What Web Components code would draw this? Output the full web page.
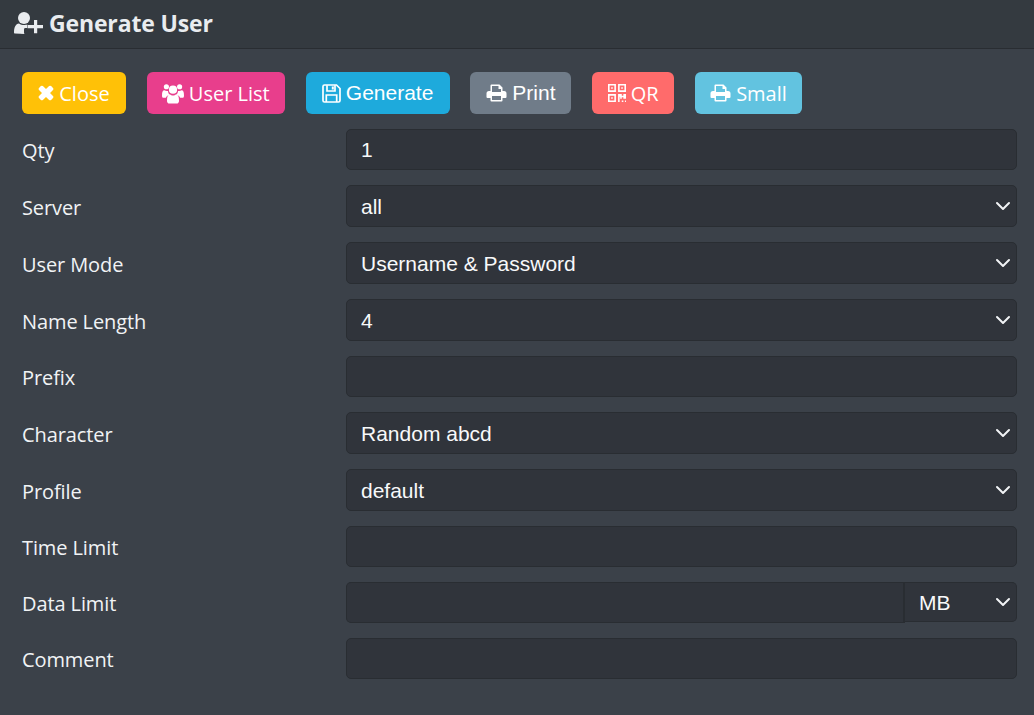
<!DOCTYPE html>
<html>
<head>
<meta charset="utf-8">
<title>Generate User</title>
<style>
	html, body { margin: 0; height: 100%; background: #3b4149; }
	body { font-family: "Open Sans", "Liberation Sans", sans-serif; color: #f1f3f5; overflow: hidden; }
	svg { display: block; }
</style>
</head>
<body>
<gen-panel>
	<span slot="icon">
		<svg width="31" height="24" viewBox="0 0 31 24" fill="#e9ecef">
			<circle cx="10" cy="7" r="6"/>
			<path d="M1 22.500c-.6 0-1-.4-1-1 0-5 1.600-8.800 5-9.100 1.500 1 3.300 1.600 5 1.600 1.500 0 2.300-.2 3.400-.8l-.4 1v2.800h-1.500c-1 0-1.500.5-1.500 1.500v3c0 1 .5 1.500 1.500 1.500z" />
			<path d="M20 9h3.200v5H29v3.200h-5.800v5H20v-5h-6.500V14H20z"/>
		</svg>
	</span>
	<span slot="title">Generate User</span>

	<button-bar slot="actions">
		<action-button color="#ffc107" width="104">
			<svg slot="icon" width="16" height="16" viewBox="0 0 16 16" fill="#fff"><path d="M15.400 12q0 .6-.4 1l-1.900 1.900q-.4.400-1 .4t-1-.4L8 11.900l-3.100 3q-.4.400-1 .4t-1-.4L1 13q-.4-.4-.4-1t.4-1l3-3-3-3.100Q.6 4.500.6 4t.4-1l1.900-1.900q.4-.4 1-.4t1 .4L8 4.100l3.100-3q.4-.4 1-.4t1 .4L15 3q.4.400.4 1t-.4 1l-3 3 3 3q.4.400.4 1z"/></svg>
			Close
		</action-button>
		<action-button color="#e83e8c" width="138">
			<svg slot="icon" width="22" height="22" viewBox="0 0 23 22" fill="#fff">
				<circle cx="11.500" cy="7.500" r="4.300"/>
				<circle cx="4.600" cy="4.500" r="2.700"/>
				<circle cx="18.400" cy="4.500" r="2.700"/>
				<path d="M0 13.500C0 10 .8 8.200 2.500 8.200c.8.600 1.600.8 2.600.8.500 0 .9-.1 1.200-.2-.1 1.500.7 3 1.700 4-2.200.7-3.500 1.700-3.900 3.200H1.500C.5 16 0 15 0 13.500zM23 13.500c0 1.500-.5 2.500-1.500 2.500h-2.600c-.4-1.500-1.700-2.500-3.900-3.200 1-1 1.800-2.500 1.700-4 .3.100.7.200 1.200.2 1 0 1.800-.2 2.600-.8 1.700 0 2.500 1.800 2.500 5.300z"/>
				<path d="M5.200 19c0-4.300 1.300-6.600 3-6.600 1 .9 2 1.300 3.300 1.300s2.300-.4 3.300-1.300c1.700 0 3 2.300 3 6.600 0 1.800-1 3-2.500 3h-7.600c-1.500 0-2.500-1.200-2.500-3z"/>
			</svg>
			User List
		</action-button>
		<action-button color="#1eaadc" width="144" face="Liberation Sans">
			<svg slot="icon" width="19" height="19" viewBox="0 0 19 19" fill="none" stroke="#fff" stroke-width="1.700">
				<path d="M2.500 1h12l3.500 3.500V16.500q0 1.500-1.500 1.500h-14Q1 18 1 16.500v-14Q1 1 2.500 1z"/>
				<path d="M5 1.200V7h8V1.200M4.300 18v-7h10.400v7"/>
				<path d="M10.800 2.500v3" stroke-width="2"/>
			</svg>
			Generate
		</action-button>
		<action-button color="#707c89" width="101" face="Liberation Sans">
			<svg slot="icon" width="21" height="18" viewBox="0 0 20 18" fill="#fff">
				<path d="M4 7V1.500Q4 .5 5 .5h8l3 3V7h1.500Q20 7 20 9.500V13q0 1-1 1h-3v2.500q0 1-1 1H5q-1 0-1-1V14H1q-1 0-1-1V9.500Q0 7 2.500 7zM5.500 2v6h9V5H12V2zM5.500 12v4h9v-4z" fill-rule="evenodd"/>
			</svg>
			Print
		</action-button>
		<action-button color="#ff6b6b" width="82">
			<svg slot="icon" width="18" height="18" viewBox="0 0 17 17" fill="#fff">
				<path fill-rule="evenodd" d="M0 0h7.500v7.500H0zM1.500 1.500V6H6V1.500zM9.500 0H17v7.500H9.500zM11 1.500V6h4.500V1.500zM0 9.500h7.500V17H0zM1.500 11v4.500H6V11z"/>
				<path d="M3 3h1.500v1.500H3zM12.500 3H14v1.500h-1.500zM3 12.500h1.500V14H3zM9.500 9.500H13V11h1.500V9.500H17V14h-2.500v-1.500H13V14h-1.500v-2H11v5H9.500zM13 15.500h1.500V17H13zM16 15.500h1V17h-1z"/>
			</svg>
			QR
		</action-button>
		<action-button color="#62c3e0" width="107">
			<svg slot="icon" width="21" height="18" viewBox="0 0 20 18" fill="#fff">
				<path d="M4 7V1.500Q4 .5 5 .5h8l3 3V7h1.500Q20 7 20 9.500V13q0 1-1 1h-3v2.500q0 1-1 1H5q-1 0-1-1V14H1q-1 0-1-1V9.500Q0 7 2.500 7zM5.500 2v6h9V5H12V2zM5.500 12v4h9v-4z" fill-rule="evenodd"/>
			</svg>
			Small
		</action-button>
	</button-bar>

	<form-row label="Qty"><text-field value="1"></text-field></form-row>
	<form-row label="Server"><select-field options="all"></select-field></form-row>
	<form-row label="User Mode"><select-field options="Username &amp; Password"></select-field></form-row>
	<form-row label="Name Length"><select-field options="4"></select-field></form-row>
	<form-row label="Prefix"><text-field></text-field></form-row>
	<form-row label="Character"><select-field options="Random abcd"></select-field></form-row>
	<form-row label="Profile"><select-field options="default"></select-field></form-row>
	<form-row label="Time Limit"><text-field></text-field></form-row>
	<form-row label="Data Limit"><unit-field unit="MB"></unit-field></form-row>
	<form-row label="Comment"><text-field></text-field></form-row>
</gen-panel>

<script>
const CHEVRON = "url(\"data:image/svg+xml,%3csvg xmlns='http://www.w3.org/2000/svg' viewBox='0 0 16 16'%3e%3cpath fill='none' stroke='%23f1f3f5' stroke-linecap='round' stroke-linejoin='round' stroke-width='2' d='M2 5l6 6 6-6'/%3e%3c/svg%3e\")";

const FIELD_CSS = `
	:host{ display: block; }
	input, select{
		display: block;
		width: 100%;
		box-sizing: border-box;
		margin: 0;
		padding: 1px 14px 0;
		color: #f8f9fa;
		background-color: #30343b;
		border: 1px solid #292d32;
		border-radius: 5px;
		outline: none;
		font: 21px "Liberation Sans", Arial, sans-serif;
	}
	input{ height: 41px; }
	select{
		height: 42px;
		appearance: none;
		-webkit-appearance: none;
		background-image: ${CHEVRON};
		background-repeat: no-repeat;
		background-position: right 5px center;
		background-size: 16px 16px;
	}
`;

class GenPanel extends HTMLElement {
	constructor() {
		super();
		this.attachShadow({ mode: 'open' });
		this.shadowRoot.innerHTML = `
			<style>
				:host{ display: block; }
				header{
					display: flex;
					align-items: center;
					gap: 4px;
					height: 46px;
					padding: 0 14px 2px;
					background: #343a40;
					border-bottom: 1px solid #292d32;
					font-size: 23px;
					font-weight: 700;
					letter-spacing: -0.15px;
					color: #e9ecef;
				}
				.body{
					display: flex;
					flex-direction: column;
					gap: 15px;
					padding: 23px 17px 0 22px;
				}
			</style>
			<header><slot name="icon"></slot><slot name="title"></slot></header>
			<div class="body"><slot name="actions"></slot><slot></slot></div>
		`;
	}
}

class ButtonBar extends HTMLElement {
	constructor() {
		super();
		this.attachShadow({ mode: 'open' });
		this.shadowRoot.innerHTML = `
			<style>:host{ display: flex; gap: 20.8px; }</style>
			<slot></slot>
		`;
	}
}

class ActionButton extends HTMLElement {
	constructor() {
		super();
		this.attachShadow({ mode: 'open' });
		this.shadowRoot.innerHTML = `
			<style>
				:host{
					display: flex;
					align-items: center;
					justify-content: center;
					gap: 5px;
					height: 42px;
					border-radius: 6px;
					font-size: 20px;
					color: #fff;
					white-space: nowrap;
				}
			</style>
			<slot name="icon"></slot><slot></slot>
		`;
	}
	connectedCallback() {
		this.style.background = this.getAttribute('color');
		this.style.width = this.getAttribute('width') + 'px';
		if (this.hasAttribute('face')) {
			this.style.fontFamily = `"${this.getAttribute('face')}", sans-serif`;
			this.style.fontSize = '21px';
		}
	}
}

class FormRow extends HTMLElement {
	constructor() {
		super();
		this.attachShadow({ mode: 'open' });
		this.shadowRoot.innerHTML = `
			<style>
				:host{
					display: grid;
					grid-template-columns: 324px 1fr;
					align-items: center;
				}
				label{ font-size: 20px; letter-spacing: -0.1px; color: #f1f3f5; padding-top: 2px; }
			</style>
			<label></label>
			<div><slot></slot></div>
		`;
	}
	connectedCallback() {
		this.shadowRoot.querySelector('label').textContent = this.getAttribute('label');
	}
}

class TextField extends HTMLElement {
	constructor() {
		super();
		this.attachShadow({ mode: 'open' });
		this.shadowRoot.innerHTML = `<style>${FIELD_CSS}</style><input type="text">`;
	}
	connectedCallback() {
		this.shadowRoot.querySelector('input').value = this.getAttribute('value') || '';
	}
}

class SelectField extends HTMLElement {
	constructor() {
		super();
		this.attachShadow({ mode: 'open' });
		this.shadowRoot.innerHTML = `<style>${FIELD_CSS}</style><select></select>`;
	}
	connectedCallback() {
		const select = this.shadowRoot.querySelector('select');
		const option = document.createElement('option');
		option.textContent = this.getAttribute('options');
		select.append(option);
	}
}

class UnitField extends HTMLElement {
	constructor() {
		super();
		this.attachShadow({ mode: 'open' });
		this.shadowRoot.innerHTML = `
			<style>
				${FIELD_CSS}
				:host{ display: flex; }
				input{ flex: 1; height: 41px; border-radius: 5px 0 0 5px; border-right-width: 2px; }
				select{ width: 112px; flex: none; height: 40px; border-left: 0; border-radius: 0 5px 5px 0; }
			</style>
			<input type="text">
			<select><option></option></select>
		`;
	}
	connectedCallback() {
		this.shadowRoot.querySelector('option').textContent = this.getAttribute('unit');
	}
}

customElements.define('gen-panel', GenPanel);
customElements.define('button-bar', ButtonBar);
customElements.define('action-button', ActionButton);
customElements.define('form-row', FormRow);
customElements.define('text-field', TextField);
customElements.define('select-field', SelectField);
customElements.define('unit-field', UnitField);
</script>
</body>
</html>
